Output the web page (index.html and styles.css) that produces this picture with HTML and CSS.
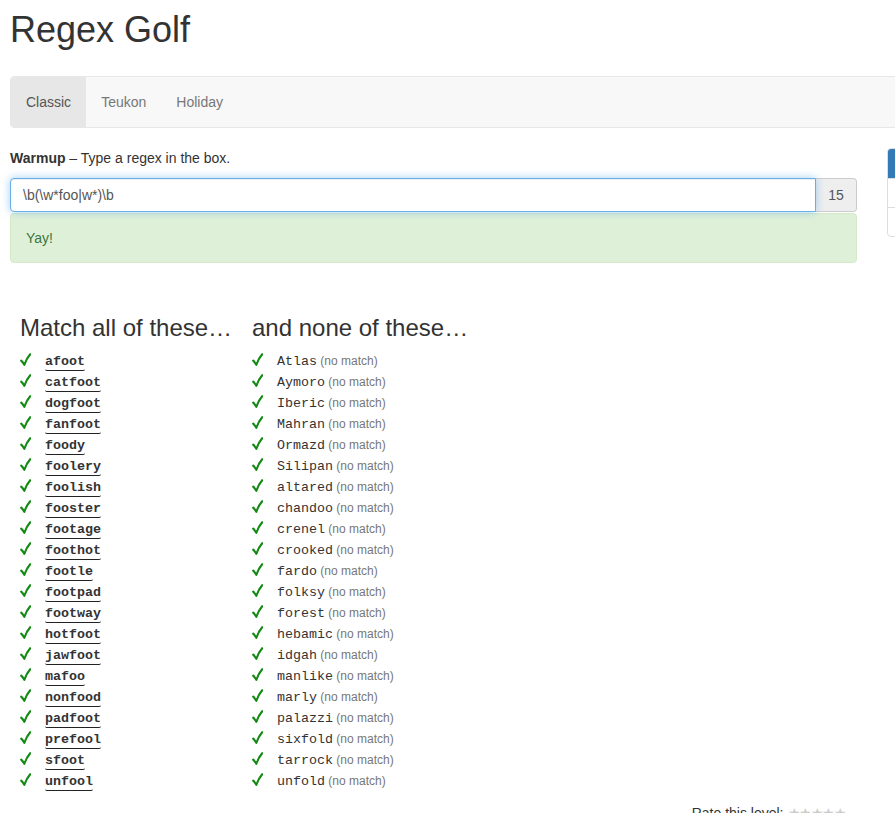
FILE: index.html
```html
<!DOCTYPE html>
<html>
<head>
<meta charset="utf-8">
<title>Regex Golf</title>
<link rel="stylesheet" href="styles.css">
</head>
<body>
<div class="page">
  <h1 class="title">Regex Golf</h1>
  <nav class="navbar">
    <a class="nav-item active">Classic</a>
    <a class="nav-item">Teukon</a>
    <a class="nav-item">Holiday</a>
  </nav>
  <div class="layout">
    <main class="main">
      <p class="intro"><b>Warmup</b> – Type a regex in the box.</p>
      <div class="input-group">
        <input class="regex" type="text" value="\b(\w*foo|w*)\b">
        <span class="addon">15</span>
      </div>
      <div class="alert">Yay!</div>
      <div class="lists">
        <section class="list">
          <h3 class="list-title">Match all of these…</h3>
          <div class="items" id="match"></div>
        </section>
        <section class="list">
          <h3 class="list-title">and none of these…</h3>
          <div class="items" id="nomatch"></div>
        </section>
      </div>
      <div class="rate">Rate this level: <span class="stars">★★★★★</span></div>
    </main>
    <aside class="side">
      <div class="panel">
        <div class="panel-heading"></div>
        <div class="panel-row"></div>
        <div class="panel-row"></div>
      </div>
    </aside>
  </div>
</div>
<script src="script.js"></script>
</body>
</html>
```
FILE: script.js
```js
var match = ["afoot","catfoot","dogfoot","fanfoot","foody","foolery","foolish","fooster","footage","foothot","footle","footpad","footway","hotfoot","jawfoot","mafoo","nonfood","padfoot","prefool","sfoot","unfool"];
var none = ["Atlas","Aymoro","Iberic","Mahran","Ormazd","Silipan","altared","chandoo","crenel","crooked","fardo","folksy","forest","hebamic","idgah","manlike","marly","palazzi","sixfold","tarrock","unfold"];
var SVGNS = "http://www.w3.org/2000/svg";
function makeCheck() {
  var c = document.createElement("span");
  c.className = "check";
  var svg = document.createElementNS(SVGNS, "svg");
  svg.setAttribute("width", "11");
  svg.setAttribute("height", "13");
  svg.setAttribute("viewBox", "0 0 11 13");
  var p = document.createElementNS(SVGNS, "path");
  p.setAttribute("d", "M1.2 7.6 C2.4 8.6 3.3 10 4.3 11.8 C5.6 8 7.6 4.2 10.2 1.2");
  p.setAttribute("fill", "none");
  p.setAttribute("stroke", "#128a12");
  p.setAttribute("stroke-width", "2.1");
  p.setAttribute("stroke-linecap", "round");
  p.setAttribute("stroke-linejoin", "round");
  svg.appendChild(p);
  c.appendChild(svg);
  return c;
}
function build(id, words, isMatch) {
  var el = document.getElementById(id);
  words.forEach(function (w) {
    var row = document.createElement("div");
    row.className = "item";
    row.appendChild(makeCheck());
    var code = document.createElement("span");
    code.className = isMatch ? "word word-match" : "word";
    code.textContent = w;
    row.appendChild(code);
    if (!isMatch) {
      var n = document.createElement("span");
      n.className = "nomatch";
      n.textContent = " (no match)";
      row.appendChild(n);
    }
    el.appendChild(row);
  });
}
build("match", match, true);
build("nomatch", none, false);
```
FILE: styles.css
```css
html, body {
  margin: 0;
  padding: 0;
  overflow: hidden;
  background: #fff;
}
body {
  font-family: "Liberation Sans", Arial, sans-serif;
  font-size: 14px;
  line-height: 20px;
  color: #333;
}
.page {
  padding: 10px 0 0 10px;
  width: 1300px;
}
.title {
  font-size: 36px;
  font-weight: 500;
  line-height: 40px;
  margin: 0 0 26px 0;
  color: #333;
}
.navbar {
  display: flex;
  height: 50px;
  width: 1100px;
  background: #f8f8f8;
  border: 1px solid #e7e7e7;
  border-radius: 4px;
  margin-bottom: 20px;
  overflow: hidden;
}
.nav-item {
  display: block;
  padding: 15px 15px;
  line-height: 20px;
  color: #777;
}
.nav-item.active {
  background: #e7e7e7;
  color: #555;
}
.layout {
  display: flex;
  gap: 30px;
  align-items: flex-start;
}
.main {
  width: 847px;
  flex: none;
}
.intro {
  margin: 0 0 10px 0;
}
.input-group {
  display: flex;
  height: 34px;
}
.regex {
  flex: 1;
  box-sizing: border-box;
  height: 34px;
  padding: 6px 12px;
  font-family: "Liberation Sans", Arial, sans-serif;
  font-size: 14px;
  color: #555;
  border: 1px solid #66afe9;
  border-radius: 4px 0 0 4px;
  outline: none;
  box-shadow: inset 0 1px 1px rgba(0,0,0,.075), 0 0 8px rgba(102,175,233,.6);
  position: relative;
  z-index: 1;
}
.addon {
  box-sizing: border-box;
  width: 41px;
  height: 34px;
  padding: 6px 0;
  text-align: center;
  color: #555;
  background: #eee;
  border: 1px solid #ccc;
  border-left: 0;
  border-radius: 0 4px 4px 0;
}
.alert {
  margin-top: 1px;
  padding: 14px 15px;
  background: #dff0d8;
  border: 1px solid #d6e9c6;
  border-radius: 4px;
  color: #3c763d;
}
.lists {
  display: flex;
  padding-left: 10px;
  margin-top: 52px;
}
.list {
  width: 232px;
}
.list-title {
  font-size: 24px;
  font-weight: 500;
  line-height: 26px;
  margin: 0 0 9px 0;
}
.item {
  height: 21px;
  line-height: 21px;
  white-space: nowrap;
}
.check {
  display: inline-block;
  width: 25px;
  vertical-align: -1px;
}
.check svg {
  display: block;
}
.word {
  font-family: "Liberation Mono", "Courier New", monospace;
  font-size: 13.33px;
  color: #333;
}
.word-match {
  display: inline-block;
  line-height: 16px;
  font-weight: bold;
  border-bottom: 1px solid #222;
  border-radius: 2px;
}
.nomatch {
  font-size: 12px;
  color: #777;
  white-space: pre;
}
.rate {
  display: flex;
  justify-content: flex-end;
  gap: 4px;
  margin-top: 12px;
  padding-right: 12px;
  color: #333;
}
.stars {
  color: #ccc;
  font-size: 14px;
  letter-spacing: -1.5px;
}
.side {
  width: 300px;
  flex: none;
}
.panel {
  border: 1px solid #ddd;
  border-radius: 4px;
  overflow: hidden;
}
.panel-heading {
  height: 29px;
  background: #337ab7;
}
.panel-row {
  height: 28px;
  border-top: 1px solid #ddd;
}
```
